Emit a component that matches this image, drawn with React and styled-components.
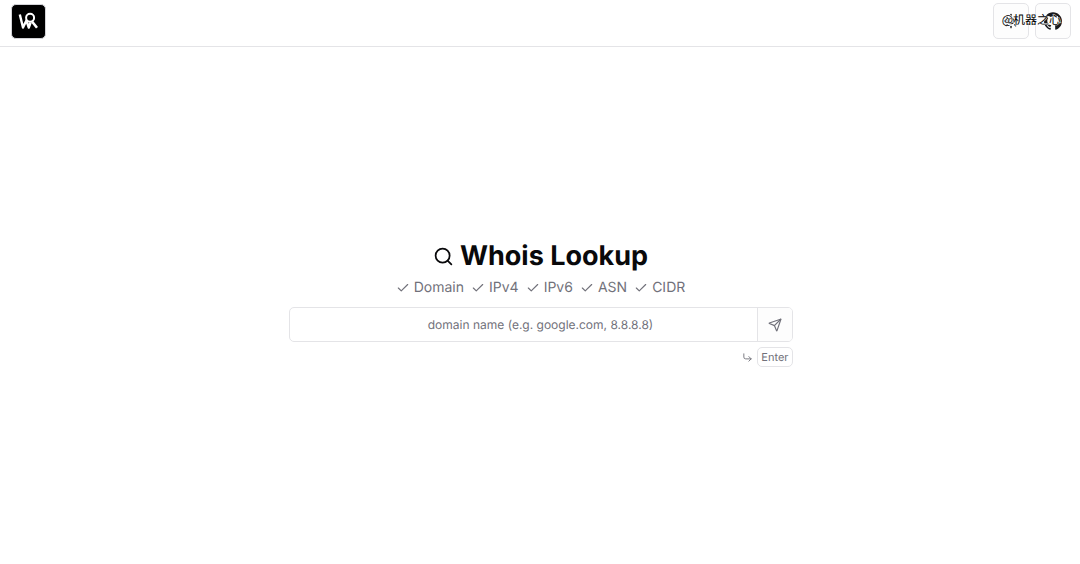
import React from "react";
import styled, { createGlobalStyle } from "styled-components";
import { Search, Check, Send, CornerDownRight, Sun } from "lucide-react";

const GlobalStyle = createGlobalStyle`
  *, *::before, *::after { box-sizing: border-box; }
  body {
    margin: 0;
    background: #ffffff;
    color: #09090b;
    font-family: Inter, "Noto Sans CJK SC", sans-serif;
    text-rendering: geometricPrecision;
  }
`;

const Page = styled.div`
  display: flex;
  flex-direction: column;
  min-height: 100vh;
`;

const Header = styled.header`
  position: relative;
  display: flex;
  align-items: center;
  justify-content: space-between;
  padding: 3px 9px 7px 11px;
  border-bottom: 1px solid #e4e4e7;
`;

const LogoLink = styled.a`
  display: block;
  width: 35px;
  height: 35px;
  border: 1px solid #d4d4d8;
  border-radius: 5px;
  background: #000000;
  overflow: hidden;

  svg { display: block; width: 100%; height: 100%; }
`;

const Actions = styled.div`
  display: flex;
  gap: 6px;
`;

const IconButton = styled.button`
  display: flex;
  align-items: center;
  justify-content: center;
  width: 36px;
  height: 36px;
  padding: 0;
  border: 1px solid #e4e4e7;
  border-radius: 5px;
  background: #fdfdfd;
  color: #18181b;
`;

const Watermark = styled.span`
  position: absolute;
  top: 12px;
  right: 19px;
  font: 12px/16px "Noto Sans CJK SC", sans-serif;
  color: #000000;
  -webkit-text-stroke: 1px #ffffff;
  paint-order: stroke fill;
  white-space: nowrap;
  pointer-events: none;
`;

const Main = styled.main`
  flex: 1;
  display: flex;
  flex-direction: column;
  align-items: center;
  justify-content: center;
  padding: 0 16px 4px 17px;
`;

const Lookup = styled.div`
  display: flex;
  flex-direction: column;
  width: 100%;
  max-width: 504px;
`;

const Title = styled.h1`
  display: flex;
  align-items: center;
  justify-content: center;
  gap: 6px;
  margin: 0;
  font-size: 27px;
  line-height: 32px;
  font-weight: 700;
`;

const Features = styled.ul`
  display: flex;
  justify-content: center;
  gap: 7px;
  margin: 6px 0 9px;
  padding: 0;
  list-style: none;
  font-size: 14px;
  line-height: 20px;
  color: #71717a;
`;

const Feature = styled.li`
  display: flex;
  align-items: center;
  gap: 4px;
`;

const SearchForm = styled.form`
  display: flex;
  height: 35px;
  border: 1px solid #e4e4e7;
  border-radius: 5px;
  overflow: hidden;
`;

const DomainInput = styled.input`
  flex: 1;
  min-width: 0;
  padding: 0 12px 0 47px;
  border: 0;
  outline: 0;
  background: transparent;
  color: #09090b;
  font: 12px/20px Inter, sans-serif;
  text-align: center;
  text-rendering: inherit;

  &::placeholder { color: #71717a; opacity: 1; }
`;

const SubmitButton = styled.button`
  display: flex;
  align-items: center;
  justify-content: center;
  width: 35px;
  padding: 0;
  border: 0;
  border-left: 1px solid #e4e4e7;
  background: #fdfdfd;
  color: #71717a;
`;

const Hint = styled.div`
  display: flex;
  align-items: center;
  justify-content: flex-end;
  gap: 4px;
  margin-top: 5px;
  color: #71717a;
`;

const Key = styled.kbd`
  padding: 1px 3px;
  border: 1px solid #e4e4e7;
  border-radius: 5px;
  font: 11px/16px Inter, sans-serif;
`;

const Logo = () => (
  <svg viewBox="0 0 33 33" fill="none" stroke="#ffffff" aria-hidden="true">
    <path d="M7.8 9.5 L11 22.5 L14.4 15.5 L16.8 22.5 L18.6 17.5" strokeWidth="2.4" strokeLinejoin="round" />
    <path d="M20 16.5 L25 22.8" strokeWidth="2.6" />
    <circle cx="18.1" cy="12.8" r="4" fill="#000000" strokeWidth="2" />
  </svg>
);

const GitHubMark = () => (
  <svg width="18" height="18" viewBox="0 0 24 24" fill="currentColor" aria-hidden="true">
    <path d="M12 .297c-6.63 0-12 5.373-12 12 0 5.303 3.438 9.8 8.205 11.385.6.113.82-.258.82-.577 0-.285-.01-1.04-.015-2.04-3.338.724-4.042-1.61-4.042-1.61C4.422 18.07 3.633 17.7 3.633 17.7c-1.087-.744.084-.729.084-.729 1.205.084 1.838 1.236 1.838 1.236 1.07 1.835 2.809 1.305 3.495.998.108-.776.417-1.305.76-1.605-2.665-.3-5.466-1.332-5.466-5.93 0-1.31.465-2.38 1.235-3.22-.135-.303-.54-1.523.105-3.176 0 0 1.005-.322 3.3 1.23.96-.267 1.98-.399 3-.405 1.02.006 2.04.138 3 .405 2.28-1.552 3.285-1.23 3.285-1.23.645 1.653.24 2.873.12 3.176.765.84 1.23 1.91 1.23 3.22 0 4.61-2.805 5.625-5.475 5.92.42.36.81 1.096.81 2.22 0 1.606-.015 2.896-.015 3.286 0 .315.21.69.825.57C20.565 22.092 24 17.592 24 12.297c0-6.627-5.373-12-12-12" />
  </svg>
);

const FEATURES = ["Domain", "IPv4", "IPv6", "ASN", "CIDR"];

export default function App() {
  return (
    <Page>
      <GlobalStyle />
      <Header>
        <LogoLink href="#" aria-label="Home"><Logo /></LogoLink>
        <Actions>
          <IconButton type="button" aria-label="Toggle theme">
            <Sun size={16} strokeWidth={2} />
          </IconButton>
          <IconButton as="a" href="#" aria-label="GitHub">
            <GitHubMark />
          </IconButton>
        </Actions>
        <Watermark>@机器之心</Watermark>
      </Header>
      <Main>
        <Lookup>
          <Title><Search size={21} strokeWidth={2} />Whois Lookup</Title>
          <Features>
            {FEATURES.map((name) => (
              <Feature key={name}><Check size={14} strokeWidth={2} />{name}</Feature>
            ))}
          </Features>
          <SearchForm onSubmit={(event) => event.preventDefault()}>
            <DomainInput
              type="text"
              aria-label="Domain name"
              placeholder="domain name (e.g. google.com, 8.8.8.8)"
            />
            <SubmitButton type="submit" aria-label="Search">
              <Send size={14} strokeWidth={2} />
            </SubmitButton>
          </SearchForm>
          <Hint><CornerDownRight size={11} strokeWidth={2} /><Key>Enter</Key></Hint>
        </Lookup>
      </Main>
    </Page>
  );
}
